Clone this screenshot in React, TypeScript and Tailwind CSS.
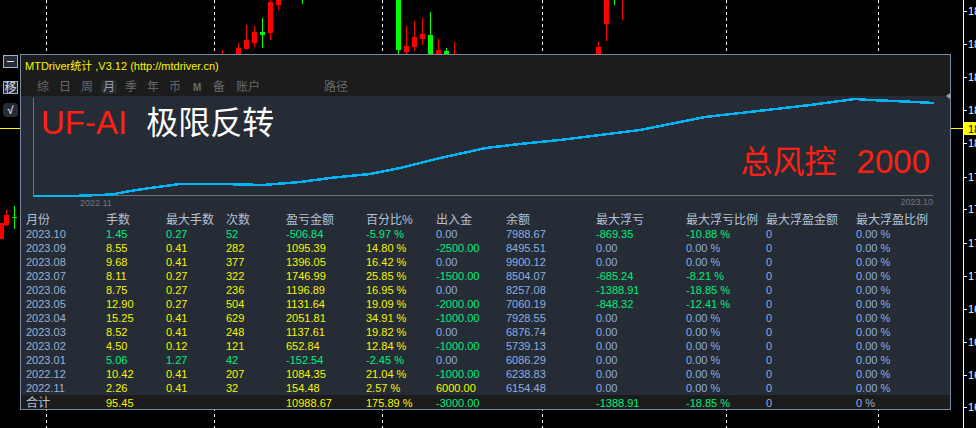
const FONT = "font-['Liberation_Sans','Noto_Sans_CJK_SC',sans-serif]";

const YELLOW = "text-[#f6f600]";
const GREEN = "text-[#00ee7c]";
const BLUE = "text-[#8fadE0]";
const COLS = "grid grid-cols-[80px_60px_60px_60px_80px_70px_70px_90px_90px_80px_90px_1fr]";

type Row = [string, string, string, string, string, string, string, string, string, string];

const rows: Row[] = [
  ["2023.10", "1.45", "0.27", "52", "-506.84", "-5.97 %", "0.00", "7988.67", "-869.35", "-10.88 %"],
  ["2023.09", "8.55", "0.41", "282", "1095.39", "14.80 %", "-2500.00", "8495.51", "0.00", "0.00 %"],
  ["2023.08", "9.68", "0.41", "377", "1396.05", "16.42 %", "0.00", "9900.12", "0.00", "0.00 %"],
  ["2023.07", "8.11", "0.27", "322", "1746.99", "25.85 %", "-1500.00", "8504.07", "-685.24", "-8.21 %"],
  ["2023.06", "8.75", "0.27", "236", "1196.89", "16.95 %", "0.00", "8257.08", "-1388.91", "-18.85 %"],
  ["2023.05", "12.90", "0.27", "504", "1131.64", "19.09 %", "-2000.00", "7060.19", "-848.32", "-12.41 %"],
  ["2023.04", "15.25", "0.41", "629", "2051.81", "34.91 %", "-1000.00", "7928.55", "0.00", "0.00 %"],
  ["2023.03", "8.52", "0.41", "248", "1137.61", "19.82 %", "0.00", "6876.74", "0.00", "0.00 %"],
  ["2023.02", "4.50", "0.12", "121", "652.84", "12.84 %", "-1000.00", "5739.13", "0.00", "0.00 %"],
  ["2023.01", "5.06", "1.27", "42", "-152.54", "-2.45 %", "0.00", "6086.29", "0.00", "0.00 %"],
  ["2022.12", "10.42", "0.41", "207", "1084.35", "21.04 %", "-1000.00", "6238.83", "0.00", "0.00 %"],
  ["2022.11", "2.26", "0.41", "32", "154.48", "2.57 %", "6000.00", "6154.48", "0.00", "0.00 %"],
];

const headers = ["月份", "手数", "最大手数", "次数", "盈亏金额", "百分比%", "出入金", "余额", "最大浮亏", "最大浮亏比例", "最大浮盈金额", "最大浮盈比例"];
const tabs = [
  { label: "综", w: "w-[22px]" },
  { label: "日", w: "w-[22px]" },
  { label: "周", w: "w-[22px]" },
  { label: "月", w: "w-[22px]" },
  { label: "季", w: "w-[22px]" },
  { label: "年", w: "w-[22px]" },
  { label: "币", w: "w-[22px]" },
  { label: "M", w: "w-[22px]" },
  { label: "备", w: "w-[23px]" },
  { label: "账户", w: "w-[88px]" },
  { label: "路径", w: "w-[40px]" },
];

// x, wick top, wick bottom, body top, body bottom, color
const candles: [number, number, number, number, number, string][] = [
  [1, 223, 240, 223, 239, "#ff0000"],
  [6, 210, 226, 215, 225, "#ff0000"],
  [222.5, 50, 54, 54, 54, "#ff0000"],
  [238.5, 43, 54, 48, 54, "#ff0000"],
  [246.5, 25, 49, 40, 49, "#ff0000"],
  [254.5, 26, 47, 32, 43, "#ff0000"],
  [262.5, 18, 48, 32, 35, "#00ff00"],
  [270.5, 0, 40, 2, 33, "#ff0000"],
  [278.5, 0, 10, 0, 5, "#ff0000"],
  [398.5, 0, 54, 0, 50, "#00ff00"],
  [406.5, 26, 54, 46, 52, "#ff0000"],
  [414.5, 21, 51, 37, 47, "#ff0000"],
  [422.5, 18, 45, 34, 39, "#ff0000"],
  [430.5, 12, 54, 35, 54, "#00ff00"],
  [438.5, 39, 54, 50, 54, "#ff0000"],
  [446.5, 48, 54, 51, 54, "#00ff00"],
  [598.5, 42, 54, 47, 54, "#ff0000"],
  [606.5, 0, 41, 0, 24, "#ff0000"],
];

const ticks = [11, 44, 77, 110, 143, 177, 209, 243, 276, 309, 342, 375, 407];
const dashes = [46, 214, 382, 542, 726, 878];
const curve =
  "33,196 72,196 112,194.5 130,191 150,188 180,184 222,184 263,185 300,182 330,178 370,174 400,168 440,158 486,148 520,144 560,140 600,135 640,130 670,124 705,117 767,110 810,105 855,99 870,100 905,101.5 934,103";

function Cell({ text, color }: { text: string; color: string }) {
  return <div className={`whitespace-nowrap ${color}`}>{text}</div>;
}

function signColor(v: string) {
  if (v.startsWith("-")) return GREEN;
  if (v.startsWith("0.00")) return BLUE;
  return YELLOW;
}

function ChartBackground() {
  return (
    <svg className="absolute inset-0" width={976} height={428} shapeRendering="crispEdges">
      {dashes.map((x) => (
        <line key={x} x1={x + 0.5} x2={x + 0.5} y1={0} y2={428} stroke="#fff" strokeDasharray="3 3" />
      ))}
      {candles.map(([x, wt, wb, bt, bb, c], i) => (
        <g key={i}>
          <line x1={x} x2={x} y1={wt} y2={wb} stroke={c} />
          <rect x={x - 2.5} y={bt} width={5} height={bb - bt} fill={c} />
        </g>
      ))}
      <line x1={454.5} x2={454.5} y1={42} y2={54} stroke="#ff0000" />
      <line x1={614.5} x2={614.5} y1={0} y2={5} stroke="#00ff00" />
      <line x1={622.5} x2={622.5} y1={0} y2={20} stroke="#ff0000" />
      <line x1={302.5} x2={302.5} y1={0} y2={4} stroke="#00ff00" />
      <line x1={14.5} x2={14.5} y1={206} y2={229} stroke="#00ff00" />
      <line x1={12} x2={17} y1={217.5} y2={217.5} stroke="#00ff00" />
      <line x1={0} x2={20} y1={128.5} y2={128.5} stroke="#ffff00" />
      <line x1={951} x2={963} y1={128.5} y2={128.5} stroke="#ffff00" />
      <line x1={963.5} x2={963.5} y1={0} y2={428} stroke="#fff" />
      {ticks.map((y) => (
        <line key={y} x1={964} x2={967} y1={y + 0.5} y2={y + 0.5} stroke="#fff" />
      ))}
      {ticks.map((y, i) => (
        <text key={y} x={968} y={y + 4} fontSize={11} fill="#e6f4ff" fontFamily="Liberation Sans" shapeRendering="auto">
          {i < 5 ? "18" : i < 9 ? "17" : "16"}
        </text>
      ))}
      <rect x={964} y={122} width={12} height={13} fill="#ffff00" />
      <text x={968} y={133} fontSize={11} fill="#000" fontFamily="Liberation Sans">
        18
      </text>
    </svg>
  );
}

function SideButtons() {
  return (
    <div className="absolute left-[3px] top-[55px] flex w-[15px] flex-col text-[#d5dce8]">
      <div className="flex h-[13px] items-center justify-center border border-[#9fb0c8] bg-[#252c36]">
        <div className="h-px w-[7px] bg-[#e8edf5]" />
      </div>
      <div className="mt-[13px] flex h-[13px] items-center justify-center border border-[#9fb0c8] bg-[#252c36] text-[12px] leading-none">
        移
      </div>
      <div className="mt-[9px] flex h-[14px] items-center justify-center rounded-sm bg-[#252c36] text-[11px] font-bold leading-none">
        √
      </div>
    </div>
  );
}

function Toolbar() {
  return (
    <div className="h-[41px] bg-[#1c1c1c]">
      <div className={`pl-1 pt-1 text-[11px] leading-[14px] ${YELLOW}`}>MTDriver统计 ,V3.12 (http://mtdriver.cn)</div>
      <div className="mt-[7px] flex pl-[16px] text-[12px] leading-[14px] text-[#6a6a6a]">
        {tabs.map((t) => (
          <div key={t.label} className={t.w}>
            <span
              className={
                t.label === "月"
                  ? "-mx-[2px] inline-block rounded-sm bg-[#252c36] px-[2px] text-[#9aa0a8]"
                  : t.label === "M"
                    ? "ml-[2px] text-[10px] font-bold"
                    : ""
              }
            >
              {t.label}
            </span>
          </div>
        ))}
      </div>
    </div>
  );
}

function EquityChart() {
  return (
    <div className="relative h-[117px]">
      <svg viewBox="21 96 929 117" width={929} height={117} shapeRendering="crispEdges">
        <line x1={33.5} x2={33.5} y1={98} y2={196} stroke="#6b7078" />
        <line x1={33} x2={933} y1={195.5} y2={195.5} stroke="#6e7074" />
        <polyline points={curve} fill="none" stroke="#00b4f5" strokeWidth={2.5} />
      </svg>
      <div className="absolute left-[20px] top-[8px] flex items-center text-[33px] leading-[38px]">
        <span className="text-[#ff2015]">UF-AI</span>
        <span className="ml-[19px] text-[32px] text-white">极限反转</span>
      </div>
      <div className="absolute right-[20px] top-[47px] flex items-center text-[32px] leading-[38px] text-[#ff2015]">
        <span>总风控</span>
        <span className="ml-[20px] text-[33px]">2000</span>
      </div>
      <div className="absolute left-[59px] top-[101px] text-[9px] leading-[12px] text-[#6f7782]">2022.11</div>
      <div className="absolute right-[17px] top-[100px] text-[9px] leading-[12px] text-[#6f7782]">2023.10</div>
    </div>
  );
}

function StatsTable() {
  return (
    <div className="text-[11px] leading-[14px]">
      <div className={`${COLS} pl-[5px] text-[12px] text-[#b4c0d2]`}>
        {headers.map((h) => (
          <div key={h} className="whitespace-nowrap">
            {h}
          </div>
        ))}
      </div>
      {rows.map((r) => {
        const lots = r[4].startsWith("-") ? GREEN : YELLOW;
        return (
          <div key={r[0]} className={`${COLS} pl-[5px]`}>
            <Cell text={r[0]} color="text-[#9bb0d2]" />
            <Cell text={r[1]} color={lots} />
            <Cell text={r[2]} color={lots} />
            <Cell text={r[3]} color={lots} />
            <Cell text={r[4]} color={lots} />
            <Cell text={r[5]} color={lots} />
            <Cell text={r[6]} color={signColor(r[6])} />
            <Cell text={r[7]} color={BLUE} />
            <Cell text={r[8]} color={signColor(r[8])} />
            <Cell text={r[9]} color={signColor(r[9])} />
            <Cell text="0" color={BLUE} />
            <Cell text="0.00 %" color={BLUE} />
          </div>
        );
      })}
      <div className={`${COLS} h-[14px] bg-[#1c1c1c] pl-[5px] pt-px`}>
        <div className="whitespace-nowrap text-[12px] text-[#b4c0d2]">合计</div>
        <Cell text="95.45" color={YELLOW} />
        <div />
        <div />
        <Cell text="10988.67" color={YELLOW} />
        <Cell text="175.89 %" color={YELLOW} />
        <Cell text="-3000.00" color={GREEN} />
        <div />
        <Cell text="-1388.91" color={GREEN} />
        <Cell text="-18.85 %" color={GREEN} />
        <Cell text="0" color={BLUE} />
        <Cell text="0 %" color={BLUE} />
      </div>
    </div>
  );
}

export default function App() {
  return (
    <div className={`relative h-[428px] w-[976px] overflow-hidden bg-black ${FONT}`}>
      <ChartBackground />
      <SideButtons />
      <div className="absolute left-[20px] top-[54px] h-[356px] w-[931px] border border-[#7b8aa3] bg-[#252c36]">
        <Toolbar />
        <EquityChart />
        <StatsTable />
        <svg className="absolute right-0 top-[38px]" width={4} height={6}>
          <polygon points="4,0 4,6 0,3" fill="#a0a0a0" />
        </svg>
      </div>
    </div>
  );
}
